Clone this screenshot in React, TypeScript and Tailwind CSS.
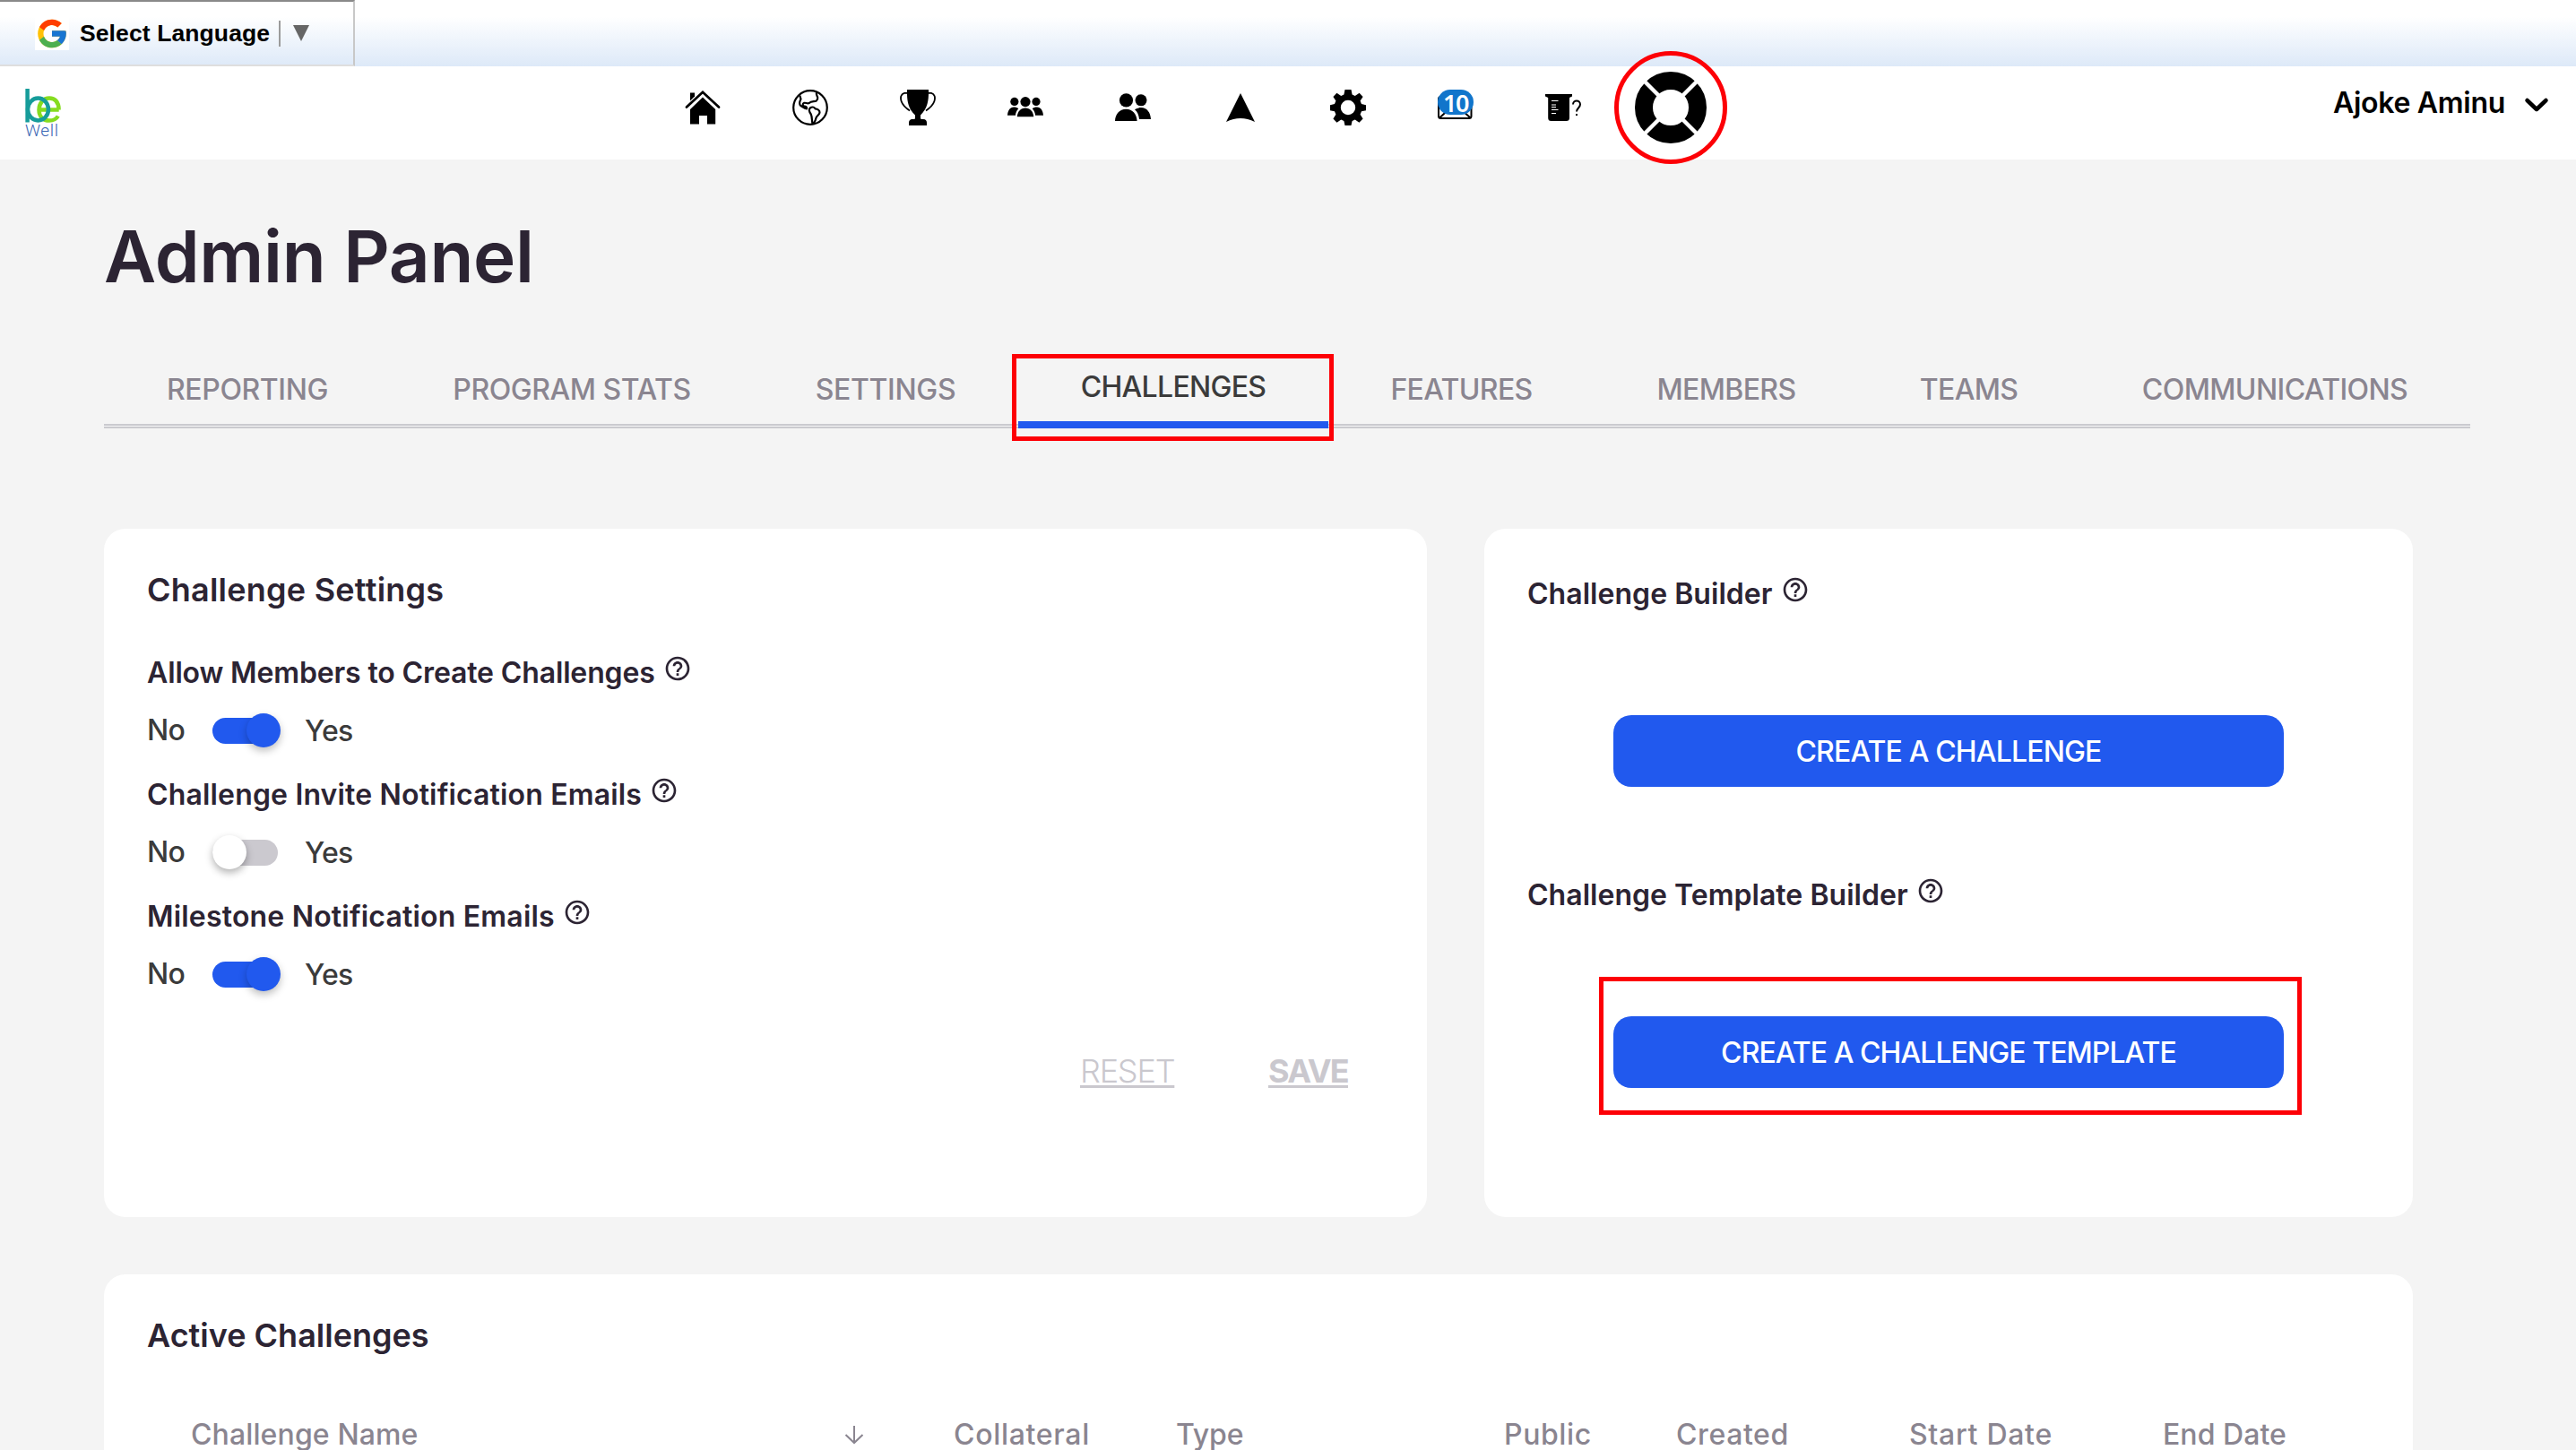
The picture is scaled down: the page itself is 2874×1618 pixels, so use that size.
import type { ReactNode } from "react";
import { FcGoogle } from "react-icons/fc";
import { MdHelpOutline } from "react-icons/md";

const HomeIcon = () => (
  <svg viewBox="0 0 40 40" className="size-10">
    <path d="M6 3.500h5v4l-5 5z" />
    <path d="M20 8.500 34.200 22v16.500H25v-9.500h-9v9.500H6V22z" />
    <path
      d="M2 19.500 20 2.800l18 16.700"
      fill="none"
      stroke="black"
      strokeWidth="2.800"
      strokeLinecap="round"
    />
  </svg>
);

const GlobeIcon = () => (
  <svg
    viewBox="0 0 40 40"
    className="size-10"
    fill="none"
    stroke="black"
    strokeWidth="2.200"
    strokeLinejoin="round"
  >
    <circle cx="20" cy="20" r="18.800" />
    <path d="M27 3c-.8 2.600.6 3.600 1.200 5.600.5 1.700-.4 3-1.700 4.200-2.700.7-5.400-.2-7.800 2.200-1.800 1-3.600-.6-5.600-.2-2 .6-1.700 3.600.2 3.800 1.800.2 3.300 1 2.700 2.700-2-.2-4.500-2-6.700-3.300C7.500 16.500 8 13.500 9.500 10.500L8.300 6.500" />
    <path d="M19.800 20.500c2-1.500 4.500-1.400 5.700.8 2.400.2 5.200 1.700 5 4.400-.2 2.500-3.400 3.300-4 5.800-.6 2.800-1.500 5.500-4 6.500-.9-3.500-.3-7.500-1.700-10.500-1.700-2.300-3.200-4.600-1-7z" />
  </svg>
);

const TrophyIcon = () => (
  <svg viewBox="0 0 40 40" className="size-10">
    <path d="M8 0h24v3c0 9-1 18-9 25.500v3.500c0 1 1.500 1 3 1 3 0 4 2 4 4v3H10v-3c0-2 1-4 4-4 1.500 0 3 0 3-1v-3.500C9 21 8 12 8 3z" />
    <path
      d="M8.500 3.800H5C1 5 .3 9 1.600 13c1.500 4.500 5 7.500 9.400 10.500M31.500 3.800H35c4 1.200 4.700 5.200 3.400 9.200-1.500 4.500-5 7.500-9.400 10.500"
      fill="none"
      stroke="black"
      strokeWidth="1.800"
    />
  </svg>
);

const GroupsIcon = () => (
  <svg viewBox="0 0 40 40" className="size-10">
    <circle cx="7.800" cy="13.400" r="4.600" />
    <circle cx="32" cy="13.400" r="4.600" />
    <path d="M0 28.800c.3-5.600 3-9.300 7-9.300 2.200 0 4.200.6 5.300 1.700-1.900 1.800-3 4.400-3.400 7.600zM40 28.800c-.3-5.600-3-9.300-7-9.300-2.200 0-4.200.6-5.300 1.700 1.900 1.800 3 4.400 3.400 7.600z" />
    <circle cx="20" cy="13.600" r="5.600" />
    <path d="M10.800 30.200c.4-5.600 4-9.600 9.200-9.600s8.800 4 9.200 9.600z" />
  </svg>
);

const MembersIcon = () => (
  <svg viewBox="0 0 40 40" className="size-10">
    <circle cx="12.500" cy="11.800" r="7.600" />
    <circle cx="29" cy="11.800" r="6.500" />
    <path d="M0 35c.3-7.600 5-13.200 12.300-13.200S24.300 27.400 24.600 35zM22 22.300c2-1.500 4-2.200 7-2.200 6.500 0 10.700 5.400 11 12.900H27c-.4-4.600-2-8.200-5-10.700z" />
  </svg>
);

const ArrowIcon = () => (
  <svg viewBox="0 0 40 40" className="size-10">
    <path d="M20 4 36 36q-8-4-16-4T4 36z" />
  </svg>
);

const GearIcon = () => (
  <svg viewBox="0 0 40 40" className="size-10">
    <path
      fillRule="evenodd"
      d="M16.500 0h7l1.100 5.600 3.200 1.300L32.600 3.700l4 4.200-3 4.700 1.400 3.500 5 1.100v6l-5 1-1.400 3.600 3 4.700-4.200 4.200-4.600-3.100-3.200 1.300L23.500 40h-7l-1.100-5.100-3.200-1.300-4.700 3.100-4.100-4.200 3-4.700L5 24.200l-5-1v-6l5-1.100 1.400-3.500-3-4.700 4-4.200 4.800 3.200 3.200-1.300zM20 11.800a8.200 8.200 0 1 0 0 16.400 8.200 8.200 0 0 0 0-16.400z"
    />
  </svg>
);

const MailIcon = () => (
  <div className="relative size-10">
    <svg viewBox="0 0 40 40" className="size-10" fill="none" stroke="black" strokeWidth="2">
      <rect x="1" y="8" width="36.500" height="24" rx="2.500" />
      <path d="m2 31.500 10-9M36.500 31.500l-10-9" />
    </svg>
    <span className="absolute left-0 top-0 flex h-7 w-10 items-center justify-center rounded-full bg-[#1175cb] pt-px font-['Noto_Sans',sans-serif] text-[27px] font-semibold leading-7 tracking-[-1.5px] text-white">
      10
    </span>
  </div>
);

const QuizIcon = () => (
  <div className="flex size-10 items-center">
    <svg viewBox="0 0 30 40" className="h-10 w-[30px]">
      <path d="M0 5h30v2.500l-3 1.500v22.500q0 3.500-3.500 3.500h-17Q3.200 35 3.200 31.500V9L0 7.500z" />
      <path
        d="M7 12.500h7.500M7 17h5M7 19.500h5M7 22.500h7.500M7 26.500h5"
        stroke="white"
        strokeWidth="1.200"
      />
    </svg>
    <svg viewBox="0 0 10 40" className="h-10 w-[10px]" fill="none" stroke="black" strokeWidth="2">
      <path d="M1 16.500c0-5.500 8-5.500 8 0 0 4-4 4-4 8" />
      <path d="M4 28h2" />
    </svg>
  </div>
);

const SupportIcon = () => (
  <div className="flex size-[126px] shrink-0 items-center justify-center rounded-full border-[5px] border-[#fd0006]">
    <svg viewBox="0 0 80 80" className="size-20">
      <circle cx="40" cy="40" r="30" fill="none" stroke="black" strokeWidth="20" />
      <path d="m8 8 64 64M72 8 8 72" stroke="white" strokeWidth="4.500" />
    </svg>
  </div>
);

const navIcons = [
  HomeIcon,
  GlobeIcon,
  TrophyIcon,
  GroupsIcon,
  MembersIcon,
  ArrowIcon,
  GearIcon,
  MailIcon,
  QuizIcon,
  SupportIcon,
];

const tabs = [
  { name: "REPORTING", style: "w-[320px] tracking-[-0.4px]" },
  { name: "PROGRAM STATS", style: "w-[404px] tracking-[-0.45px]" },
  { name: "SETTINGS", style: "w-[296px] tracking-[-0.35px]" },
  { name: "CHALLENGES", style: "w-[346px] tracking-[-0.7px]" },
  { name: "FEATURES", style: "w-[297px] tracking-[-0.65px]" },
  { name: "MEMBERS", style: "w-[294px] tracking-[-0.65px]" },
  { name: "TEAMS", style: "w-[247px] tracking-[-0.7px]" },
  { name: "COMMUNICATIONS", style: "w-[436px] tracking-[-0.6px]" },
];

const settings = [
  { label: "Allow Members to Create Challenges", on: true, style: "tracking-[-0.14px]" },
  { label: "Challenge Invite Notification Emails", on: false, style: "tracking-[0.16px]" },
  { label: "Milestone Notification Emails", on: true, style: "tracking-[0.19px]" },
];

const columns = [
  { name: "Challenge Name", style: "w-[729px] tracking-[0.12px]" },
  { name: "", style: "w-[122px]" },
  { name: "Collateral", style: "w-[248px] tracking-[0.7px]" },
  { name: "Type", style: "w-[366px] tracking-[-0.1px]" },
  { name: "Public", style: "w-[192px] tracking-[0.6px]" },
  { name: "Created", style: "w-[260px] tracking-[0.6px]" },
  { name: "Start Date", style: "w-[283px] tracking-[0.7px]" },
  { name: "End Date", style: "w-[160px] tracking-[0.05px]" },
];

const Label = ({ children, className }: { children: ReactNode; className?: string }) => (
  <div className="flex h-10 items-center gap-[9px] text-[32px] font-semibold leading-10 text-[#2c2433]">
    <span className={`pt-[2px] ${className}`}>{children}</span>
    <MdHelpOutline className="mb-2 size-8" />
  </div>
);

const Toggle = ({ on }: { on: boolean }) => (
  <div className="flex h-[38px] w-[76px] items-center">
    <div
      className={
        on
          ? "flex h-[29px] w-[73px] items-center justify-end rounded-full bg-[#2159ee]"
          : "flex h-[29px] w-[73px] items-center rounded-full bg-[#cbc9cf]"
      }
    >
      <div
        className={
          on
            ? "-mr-[3px] size-[38px] rounded-full bg-[#2159ee] shadow-[0_4px_8px_rgba(0,0,0,0.25)]"
            : "size-[38px] rounded-full bg-white shadow-[0_4px_8px_rgba(0,0,0,0.3)]"
        }
      />
    </div>
  </div>
);

const App = () => {
  return (
    <div className="h-[1618px] w-[2874px] overflow-hidden bg-[#f4f4f4] font-['Inter',sans-serif] text-black">
      <div className="h-[74px] bg-linear-to-b from-white from-25% to-[#dde9f8]">
        <div className="flex h-[74px] w-[396px] items-center border-y-2 border-r-2 border-t-[#898989] border-r-[#c8c8c8] border-b-[#dedede] pl-[39px]">
          <div className="flex size-[38px] items-center justify-center bg-white">
            <FcGoogle className="size-[41px]" />
          </div>
          <span className="ml-3 w-[212px] whitespace-nowrap pt-px font-['Liberation_Sans',sans-serif] text-[26.500px] font-bold tracking-[0.1px]">
            Select Language
          </span>
          <div className="ml-[10px] h-[29px] w-[2px] bg-[#9b9b9b]" />
          <svg viewBox="0 0 18 18" className="ml-[14px] size-[18px]">
            <path d="M0 0h18L9 18z" fill="#666" />
          </svg>
        </div>
      </div>

      <header className="relative z-10 flex h-[104px] items-center bg-white pb-3">
        <svg viewBox="0 0 44 64" className="ml-7 mt-[22px] h-16 w-11 overflow-visible">
          <g fill="none" strokeWidth="4.500">
            <path
              d="M13.500 23.500h24.200M37.600 23.500C37.600 15 33.500 10.500 27 10.500S15.500 16 15.500 23.500 20 35.500 27 35.500c4.500 0 7.800-1.500 9.800-5"
              stroke="#86dc1f"
            />
            <path d="M2.600 0v37.500" stroke="#169c9a" />
            <ellipse cx="14.500" cy="23" rx="11.500" ry="12.500" stroke="#169c9a" />
          </g>
          <text x="0" y="53" fontSize="19" fontWeight="300" textLength="37" fill="#3a66b4" fontFamily="Roboto">
            Well
          </text>
        </svg>
        <nav className="ml-[652px] flex items-center">
          {navIcons.map((Icon, index) => (
            <div key={index} className="flex w-[120px] items-center justify-center">
              <Icon />
            </div>
          ))}
        </nav>
        <div className="ml-auto mr-[30px] flex items-center gap-[21px]">
          <span className="mb-[10px] text-[32px] font-semibold leading-10 tracking-[-0.3px]">
            Ajoke Aminu
          </span>
          <svg viewBox="0 0 28 20" className="mb-[6px] h-5 w-7">
            <path
              d="m3.500 5 10.500 10L24.500 5"
              fill="none"
              stroke="black"
              strokeWidth="4.500"
              strokeLinecap="round"
              strokeLinejoin="round"
            />
          </svg>
        </div>
      </header>

      <main className="px-[116px] pt-[58px]">
        <h1 className="text-[80px] font-semibold leading-[100px] tracking-[-0.3px] text-[#2c2433]">
          Admin Panel
        </h1>

        <div className="mt-[59px] w-[2640px]">
          <div className="flex h-[78px]">
            {tabs.map((tab) => (
              <div key={tab.name} className={`relative h-[83px] shrink-0 text-center ${tab.style}`}>
                {tab.name === "CHALLENGES" ? (
                  <>
                    <div className="h-[83px] border-b-8 border-[#2159ee] bg-[#f4f4f4] pt-4 text-[32px] font-medium leading-[41px] text-[#3b3b3b]">
                      {tab.name}
                    </div>
                    <div className="absolute -left-[7px] top-0 h-[97px] w-[359px] border-[5px] border-[#fd0006]" />
                  </>
                ) : (
                  <div className="pt-[19px] text-[32px] font-medium leading-[41px] text-[#8a8590]">
                    {tab.name}
                  </div>
                )}
              </div>
            ))}
          </div>
          <div className="h-[5px] border-y-2 border-[#cacacf]" />
        </div>

        <div className="mt-[112px] flex gap-16">
          <section className="h-[768px] w-[1476px] rounded-3xl bg-white px-12 pt-[43px]">
            <h2 className="text-4xl font-semibold leading-[50px] tracking-[0.24px] text-[#2c2433]">
              Challenge Settings
            </h2>
            <div className="mt-[47px] flex flex-col gap-[22px]">
              {settings.map((setting) => (
                <div key={setting.label} className="h-[114px]">
                  <Label className={setting.style}>{setting.label}</Label>
                  <div className="mt-[25px] flex h-10 items-center text-[32px] font-medium leading-10 tracking-[-0.6px] text-[#3b3b3b]">
                    <span className="w-[73px]">No</span>
                    <Toggle on={setting.on} />
                    <span className="ml-[27px] pt-px">Yes</span>
                  </div>
                </div>
              ))}
            </div>
            <div className="mt-[54px] flex justify-end gap-[104px] pr-10 text-4xl leading-[50px] text-[#cac8ce]">
              <button className="w-[106px] whitespace-nowrap text-left font-light tracking-[-1.2px] underline decoration-[3px] underline-offset-[3px]">
                RESET
              </button>
              <button className="w-[89px] whitespace-nowrap text-left font-bold tracking-[-1.700px] underline decoration-[3px] underline-offset-[3px]">
                SAVE
              </button>
            </div>
          </section>

          <section className="h-[768px] w-[1036px] rounded-3xl bg-white px-12 pt-[52px]">
            <Label className="tracking-[0.04px]">Challenge Builder</Label>
            <button className="mx-auto mt-[116px] flex h-20 w-[748px] items-center justify-center rounded-[20px] bg-[#2159ee] pt-[2px] text-[32px] font-medium tracking-[-0.84px] text-white">
              CREATE A CHALLENGE
            </button>
            <div className="mt-[100px]">
              <Label className="tracking-[0.03px]">Challenge Template Builder</Label>
            </div>
            <div className="ml-20 mt-[72px] h-[154px] w-[784px] border-[5px] border-[#fd0006] pl-[11px] pt-[39px]">
              <button className="flex h-20 w-[748px] items-center justify-center rounded-[20px] bg-[#2159ee] pt-[2px] text-[32px] font-medium tracking-[-0.93px] text-white">
                CREATE A CHALLENGE TEMPLATE
              </button>
            </div>
          </section>
        </div>

        <section className="mt-16 h-[400px] w-[2576px] rounded-3xl bg-white px-12 pt-[43px]">
          <h2 className="text-4xl font-semibold leading-[50px] tracking-[0px] text-[#2c2433]">
            Active Challenges
          </h2>
          <div className="ml-[49px] mt-[66px] flex text-[32px] font-medium leading-10 text-[#8a8590]">
            {columns.map((column) => (
              <div key={column.name} className={`flex shrink-0 items-center ${column.style}`}>
                {column.name || (
                  <svg viewBox="0 0 22 22" className="size-[22px]" fill="none" stroke="#8a8590" strokeWidth="2">
                    <path d="M11 1v19M1.500 11l9.500 9 9.500-9" />
                  </svg>
                )}
              </div>
            ))}
          </div>
        </section>
      </main>
    </div>
  );
};

export default App;
